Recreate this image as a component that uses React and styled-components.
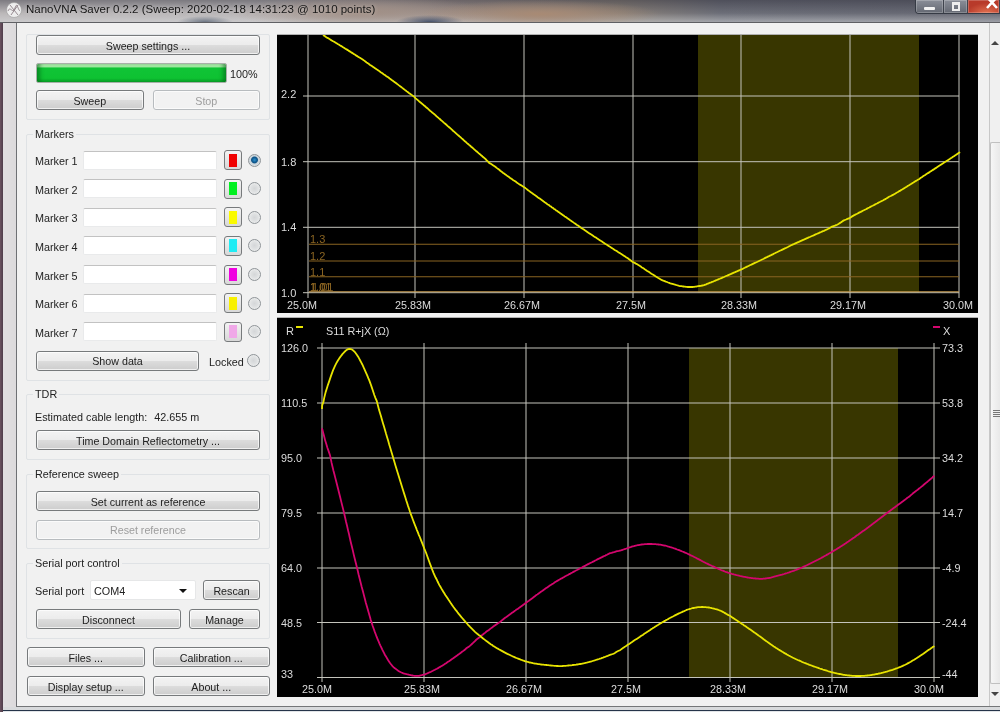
import React from "react";
import styled, { createGlobalStyle } from "styled-components";

const Global = createGlobalStyle`
  html, body { margin: 0; padding: 0; background: #3c3a42; }
  * { box-sizing: border-box; }
`;

const Screen = styled.div`
  width: 1000px; height: 712px; overflow: hidden;
  display: flex; flex-direction: column;
  font: 10.8px "Liberation Sans", Arial, sans-serif; color: #222;
  background: linear-gradient(90deg, #6b5260 0, #4e3c4a 3px, #e0dee0 3px, #dcdadc 16px, #30323a 16px);
  filter: blur(.25px);
`;
const TitleBar = styled.header`
  height: 23px; flex: none; display: flex; align-items: flex-start;
  background:
    radial-gradient(28px 6px at 205px 22px, #6d7684 0, transparent 100%),
    radial-gradient(34px 7px at 430px 22px, #45516a 0, transparent 100%),
    radial-gradient(120px 14px at 540px 14px, #a88a74 0, transparent 100%),
    radial-gradient(130px 16px at 360px 12px, #a08e84 0, transparent 100%),
    linear-gradient(180deg, rgba(50,50,62,.5) 0, rgba(110,112,120,.15) 60%, rgba(205,207,210,.55) 100%),
    linear-gradient(90deg, #c8c4c4 0, #c4c0c0 28%, #a49690 45%, #8c8278 62%, #6c6e78 72%, #646672 100%);
  border-bottom: 1px solid #5f6064;
`;
const TitleIcon = styled.svg`
  width: 16px; height: 16px; margin: 2px 4px 0 6px; flex: none;
`;
const TitleText = styled.span`
  font-size: 11.5px; line-height: 18px; color: #161616; white-space: nowrap; flex: 1;
  text-shadow: 0 0 4px rgba(255,255,255,.45);
`;
const WinControls = styled.div`
  display: flex; height: 14px; width: 85px; flex: none;
  border: 1px solid #353a44; border-top: 0; border-right: 0; border-radius: 0 0 0 4px; overflow: hidden;
`;
const WinButton = styled.div`
  width: ${p => p.$w}px; display: flex; align-items: center; justify-content: center;
  background: ${p => p.$close
    ? "radial-gradient(20px 10px at 60% 100%, #e07050, #b83a2a)"
    : "linear-gradient(180deg,#8a8e98,#646872)"};
  border-right: 1px solid #3f434d;
  box-shadow: inset 0 0 0 1px rgba(255,255,255,.22);
`;
const MinGlyph = styled.i`width: 11px; height: 3px; background: #f2f2f2; margin-top: 3px; border-radius: 1px;`;
const MaxGlyph = styled.i`width: 8px; height: 9px; border: 2px solid #eee; border-top-width: 3px; margin-top: -1px;`;
const CloseGlyph = styled.svg`width: 14px; height: 14px; margin-left: 16px; flex: none;`;

const Body = styled.div`
  margin-left: 16px; display: flex; height: 684px; flex: none;
  background: #f1f1f1; border-left: 1px solid #6e7074; border-bottom: 1px solid #747678;
`;
const BottomEdge = styled.div`
  flex: 1; margin-left: 3px;
  background: linear-gradient(180deg, #d8dadc 0, #d8dadc 3px, #26344a 3px, #26344a 4px, #e2e5e8 4px);
`;
const Sidebar = styled.aside`
  width: 260px; flex: none; padding: 11px 7px 0 9px;
  display: flex; flex-direction: column;
`;
const Group = styled.section`
  border: 1px solid #dfe2e5; border-radius: 2px; padding: 0 9px;
  margin-top: ${p => p.$mt || 0}px; height: ${p => p.$h}px;
  flex: none; display: flex; flex-direction: column;
`;
const GroupTitle = styled.h3`
  margin: -8px 0 ${p => p.$gap}px -3px; height: 14px; line-height: 14px; padding: 0 2px;
  font-weight: normal; font-size: 10.8px; background: #f1f1f1; align-self: flex-start; color: #222;
`;
const Btn = styled.button`
  height: 20px; flex: ${p => p.$w ? `0 0 ${p.$w}px` : 1}; padding: 1px 0 0; min-width: 0;
  font: 10.7px "Liberation Sans", Arial, sans-serif;
  color: ${p => p.disabled ? "#9d9d9d" : "#222"};
  border: 1px solid ${p => p.disabled ? "#b8bcbf" : "#777a7c"}; border-radius: 3px;
  background: ${p => p.disabled
    ? "#f2f2f2"
    : "linear-gradient(180deg,#f3f3f3 0,#ececec 48%,#dcdcdc 52%,#cdcdcd 100%)"};
  box-shadow: inset 0 0 0 1px rgba(255,255,255,.7);
`;
const Row = styled.div`
  display: flex; align-items: center; flex: none; height: 20px;
  gap: ${p => p.$gap || 0}px; margin-top: ${p => p.$mt || 0}px;
`;
const Progress = styled.div`
  width: 191px; height: 20px; border: 1px solid #a8b0a8; border-radius: 2px;
  background:
    linear-gradient(180deg, #b4f0b4 0, #a0eaa0 16%, #10c436 22%, #0ec232 78%, #0aa82a 100%);
  box-shadow: inset 5px 0 4px -2px rgba(0,90,20,.55), inset -5px 0 4px -2px rgba(0,90,20,.55);
`;
const Percent = styled.span`margin-left: 3px; padding-top: 1px;`;
const MarkerLabel = styled.label`width: 47px; flex: none; white-space: nowrap; padding: 2px 0 0 0; margin-left: -1px; margin-right: 1px;`;
const TextInput = styled.div`
  width: 134px; height: 19px; flex: none; background: #fff;
  border: 1px solid #e9eaeb; border-top-color: #c2c2c2; border-radius: 2px;
`;
const Swatch = styled.div`
  width: 18px; height: 20px; margin-left: 7px; flex: none;
  border: 1px solid #777a7c; border-radius: 3px;
  background: linear-gradient(180deg,#f3f3f3,#d8d8d8);
  display: flex; align-items: center; justify-content: center;
`;
const SwatchFill = styled.i`width: 8px; height: 13px; background: ${p => p.$c};`;
const Radio = styled.span`
  width: 13px; height: 13px; border-radius: 50%; flex: none;
  margin-left: ${p => p.$ml};
  border: 1px solid #8f9498;
  background: ${p => p.$on
    ? "radial-gradient(circle at 50% 45%, #2c90cc 0, #0b4f84 36%, #c8d2d8 48%, #eceff1 100%)"
    : "radial-gradient(circle at 50% 50%, #d4d6d8 0, #dfe1e2 45%, #f6f6f6 100%)"};
`;
const Caption = styled.span`
  white-space: nowrap; padding-top: 2px; flex: none;
  margin-left: ${p => p.$ml}px; width: ${p => p.$w ? `${p.$w}px` : "auto"};
`;
const CableLine = styled.div`height: 14px; line-height: 14px; margin: 9px 0 6px -1px; display: flex; gap: 7px;`;
const Combo = styled.div`
  width: 106px; height: 20px; flex: none; margin-right: 7px;
  background: #fff; border: 1px solid #e6e7e8; border-radius: 2px;
  display: flex; align-items: center; justify-content: space-between; padding: 1px 8px 0 3px;
`;
const ComboArrow = styled.i`
  width: 0; height: 0; border: 4px solid transparent; border-top: 4px solid #111; border-bottom: 0;
`;
const FooterRow = styled.div`
  display: flex; gap: 8px; margin-top: ${p => p.$mt}px; flex: none; margin-left: 1px; width: 243px;
`;

const Charts = styled.main`
  width: 701px; flex: none; padding-top: 12px;
  display: flex; flex-direction: column; gap: 5px;
`;
const Plot = styled.svg`
  display: block; width: 701px; height: ${p => p.$h}px; background: #000; flex: none;
  font-family: "Liberation Sans", Arial, sans-serif;
  box-shadow: 0 -1px 0 #b0b0b0;
`;
const ScrollTrack = styled.div`
  margin-left: 11px; width: 11px; flex: none; height: 683px;
  border-left: 1px solid #c8c8c8; background: #f0f0f0;
  display: flex; flex-direction: column; align-items: center;
`;
const ArrowUp = styled.i`
  margin-top: 18px; width: 0; height: 0; flex: none;
  border: 4px solid transparent; border-bottom: 4px solid #444; border-top: 0;
`;
const Thumb = styled.div`
  margin-top: 97px; width: 100%; height: 542px; flex: none;
  border: 1px solid #c0c0c0; border-right: 0; border-radius: 2px 0 0 2px;
  background: linear-gradient(90deg,#f6f6f6,#e8e8e8);
  display: flex; align-items: center; justify-content: center;
`;
const Grip = styled.i`
  width: 7px; height: 7px; margin-left: 2px;
  background: repeating-linear-gradient(180deg,#777 0 1px,#eee 1px 2px);
`;
const ArrowDown = styled.i`
  margin-top: 8px; width: 0; height: 0; flex: none;
  border: 4px solid transparent; border-top: 4px solid #444; border-bottom: 0;
`;

// The curves are traced from a handful of points: sample a spline along x,
// then even out the tracing noise with a short moving average.
const smooth = (pts, half = 6) => {
  const dense = [];
  for (let i = 0; i < pts.length - 1; i++) {
    const p0 = pts[i - 1] || pts[i], p1 = pts[i], p2 = pts[i + 1], p3 = pts[i + 2] || p2;
    const n = Math.max(2, Math.ceil(p2[0] - p1[0]));
    for (let k = 0; k < n; k++) {
      const t = k / n, a = t * t, b = a * t;
      const f = j => 0.5 * (2 * p1[j] + (p2[j] - p0[j]) * t + (2 * p0[j] - 5 * p1[j] + 4 * p2[j] - p3[j]) * a + (3 * p1[j] - p0[j] - 3 * p2[j] + p3[j]) * b);
      dense.push([f(0), f(1)]);
    }
  }
  dense.push(pts[pts.length - 1]);
  const out = dense.map((p, i) => {
    const w = Math.min(half, i, dense.length - 1 - i);
    let sy = 0;
    for (let j = i - w; j <= i + w; j++) sy += dense[j][1];
    return [p[0], sy / (2 * w + 1)];
  });
  return "M" + out.map(p => `${p[0].toFixed(1)} ${p[1].toFixed(1)}`).join("L");
};

const GRID = "#c4c4bc", LBL = "#dcdcdc", YEL = "#e8e400", MAG = "#d4066e", BAND = "#383600", SWR = "#8a6422";

const swrCurve = [[323,35],[363,60],[414,97],[489,162],[525,188],[580,227],[632,261],[662,280],[680,286],[689,287],[704,285],[742,269],[792,245],[832,227],[849,218],[889,197],[919,179],[960,152]];
const rCurve = [[322,409],[323.5,400],[333,370],[341.7,355],[350,348.5],[358.3,356.7],[368.3,378.3],[376.7,401.7],[393.3,458.3],[410,511.7],[424.3,548.3],[436.7,580],[453.3,606.7],[468.3,625],[480,636],[500,650],[526.7,661.7],[553.3,665.7],[566.7,665.7],[586.7,662.7],[610,655],[620,650],[640,636.7],[663.3,621.7],[686.7,610],[701.7,607],[716.7,609.3],[730,616],[753.3,631.7],[776.7,648.3],[800,661],[832.3,672.3],[856.7,676],[880,673.3],[906.7,664],[934.3,646]];
const xCurve = [[322,428.3],[330,456.7],[343.3,510],[356.7,566.7],[371.7,623.3],[385,655],[396.7,670],[413.3,675.7],[425,674.3],[443.3,665],[466.7,648.3],[480,636.7],[500,621.7],[526.7,602.3],[553.3,583.3],[583.3,566.7],[610,553.3],[620,550.7],[636.7,545.3],[651.7,544],[666.7,546],[686.7,553.3],[710,565],[730,573.3],[753.3,578.3],[770,577.7],[800,568.3],[832.3,551.7],[860,533.3],[886.7,513.3],[913.3,493.3],[934.3,475.7]];

const topX = [308,415,524,633,741,850,959];
const topXL = ["25.0M","25.83M","26.67M","27.5M","28.33M","29.17M","30.0M"];
const botX = [322,424,526,628,730,832,934];
const botY = [348,403,458,513,568,622.5,677.5];
const leftL = ["126.0","110.5","95.0","79.5","64.0","48.5","33"];
const rightL = ["73.3","53.8","34.2","14.7","-4.9","-24.4","-44"];

const TopChart = () => (
  <Plot $h={278} viewBox="277 35 701 278">
    <rect x="698" y="35" width="221" height="258" fill={BAND} />
    {topX.map(x => <line key={x} x1={x} x2={x} y1="35" y2="298" stroke={GRID} strokeWidth="1" />)}
    {[96,161.7,227.3,292.7].map(y => <line key={y} x1="303" x2="959" y1={y} y2={y} stroke={GRID} strokeWidth="1" />)}
    {[[244.3,"1.3"],[261,"1.2"],[276.7,"1.1"]].map(([y,t]) => (
      <g key={t}>
        <line x1="309" x2="959" y1={y} y2={y} stroke={SWR} strokeWidth="1.1" />
        <text x="310" y={y-1} fontSize="11" fill={SWR}>{t}</text>
      </g>
    ))}
    <line x1="309" x2="959" y1="291.7" y2="291.7" stroke="#c49a50" strokeWidth="1.1" />
    <text x="310" y="291" fontSize="11" fill={SWR}>1.01</text>
    <text x="310" y="291" fontSize="11" fill={SWR}>1.0</text>
    <text x="312" y="291" fontSize="11" fill={SWR}>1.01</text>
    {[["2.2",98],["1.8",165.5],["1.4",231],["1.0",296.5]].map(([t,y]) => (
      <text key={t} x="281" y={y} fontSize="11" fill={LBL}>{t}</text>
    ))}
    {topX.map((x,i) => <text key={x} x={i===6 ? 958 : i===0 ? 302 : x-2} y="308.5" fontSize="10.8" fill={LBL} textAnchor="middle">{topXL[i]}</text>)}
    <path d={smooth(swrCurve)} fill="none" stroke={YEL} strokeWidth="1.8" />
  </Plot>
);

const BottomChart = () => (
  <Plot $h={379} viewBox="277 318 701 379">
    <rect x="689" y="348" width="209" height="329.5" fill={BAND} />
    {botX.map(x => <line key={x} x1={x} x2={x} y1="343" y2="682" stroke={GRID} strokeWidth="1" />)}
    {botY.map(y => <line key={y} x1="317" x2="940" y1={y} y2={y} stroke={GRID} strokeWidth="1" />)}
    <text x="286" y="334.5" fontSize="11" fill={LBL}>R</text>
    <line x1="296" x2="303" y1="327" y2="327" stroke={YEL} strokeWidth="2" />
    <text x="326" y="334.5" fontSize="10.8" fill={LBL}>S11 R+jX (Ω)</text>
    <line x1="933" x2="940" y1="327" y2="327" stroke={MAG} strokeWidth="2" />
    <text x="943" y="334.5" fontSize="11" fill={LBL}>X</text>
    {leftL.map((t,i) => <text key={t} x="281" y={i===6 ? 678 : botY[i]+4} fontSize="10.8" fill={LBL}>{t}</text>)}
    {rightL.map((t,i) => <text key={t} x="942" y={i===6 ? 678 : botY[i]+4} fontSize="10.8" fill={LBL}>{t}</text>)}
    {botX.map((x,i) => <text key={x} x={i===6 ? 929 : i===0 ? 317 : x-2} y="693" fontSize="10.8" fill={LBL} textAnchor="middle">{topXL[i]}</text>)}
    <path d={smooth(xCurve, 4)} fill="none" stroke={MAG} strokeWidth="1.8" />
    <path d={smooth(rCurve, 3)} fill="none" stroke={YEL} strokeWidth="1.8" />
  </Plot>
);

const markers = [
  ["Marker 1","#f00000"],["Marker 2","#00f020"],["Marker 3","#fafa00"],["Marker 4","#20ecf4"],
  ["Marker 5","#f000e0"],["Marker 6","#f8f000"],["Marker 7","#f0a8e8"],
];

export default function App() {
  return (
    <Screen>
      <Global />
      <TitleBar>
        <TitleIcon viewBox="0 0 16 16">
          <circle cx="8" cy="8" r="7.5" fill="#eeeeee" stroke="#9a9a9a" strokeWidth=".6" />
          <path d="M2 9C4 3 7 13 9 6s3 2 5 3M4 3l8 10M12 3 5 13" fill="none" stroke="#8c7f86" strokeWidth=".9" />
        </TitleIcon>
        <TitleText>NanoVNA Saver 0.2.2 (Sweep: 2020-02-18 14:31:23 @ 1010 points)</TitleText>
        <WinControls>
          <WinButton $w={28}><MinGlyph /></WinButton>
          <WinButton $w={25}><MaxGlyph /></WinButton>
          <WinButton $w={32} $close>
            <CloseGlyph viewBox="0 0 14 14"><path d="M2 -3 12 8M12 -3 2 8" stroke="#fff" strokeWidth="2.6" fill="none" /></CloseGlyph>
          </WinButton>
        </WinControls>
      </TitleBar>
      <Body>
        <Sidebar>
          <Group $h={86}>
            <Row><Btn>Sweep settings ...</Btn></Row>
            <Row $mt={8}><Progress /><Percent>100%</Percent></Row>
            <Row $mt={7} $gap={9}><Btn>Sweep</Btn><Btn disabled>Stop</Btn></Row>
          </Group>
          <Group $mt={14} $h={247}>
            <GroupTitle $gap={9}>Markers</GroupTitle>
            {markers.map(([name, c], i) => (
              <Row key={name} $mt={i ? 8.67 : 0}>
                <MarkerLabel>{name}</MarkerLabel>
                <TextInput />
                <Swatch><SwatchFill $c={c} /></Swatch>
                <Radio $ml="6px" $on={i === 0} />
              </Row>
            ))}
            <Row $mt={9}>
              <Btn $w={163}>Show data</Btn>
              <Caption $ml={10}>Locked</Caption>
              <Radio $ml="auto" />
            </Row>
          </Group>
          <Group $mt={13} $h={66}>
            <GroupTitle $gap={0}>TDR</GroupTitle>
            <CableLine><span>Estimated cable length:</span><span>42.655 m</span></CableLine>
            <Row><Btn>Time Domain Reflectometry ...</Btn></Row>
          </Group>
          <Group $mt={14} $h={75}>
            <GroupTitle $gap={10}>Reference sweep</GroupTitle>
            <Row><Btn>Set current as reference</Btn></Row>
            <Row $mt={8.5}><Btn disabled>Reset reference</Btn></Row>
          </Group>
          <Group $mt={14} $h={76}>
            <GroupTitle $gap={10}>Serial port control</GroupTitle>
            <Row>
              <Caption $ml={-1} $w={55}>Serial port</Caption>
              <Combo><span>COM4</span><ComboArrow /></Combo>
              <Btn>Rescan</Btn>
            </Row>
            <Row $mt={9} $gap={8}><Btn $w={145}>Disconnect</Btn><Btn>Manage</Btn></Row>
          </Group>
          <FooterRow $mt={8}><Btn>Files ...</Btn><Btn>Calibration ...</Btn></FooterRow>
          <FooterRow $mt={9}><Btn>Display setup ...</Btn><Btn>About ...</Btn></FooterRow>
        </Sidebar>
        <Charts>
          <TopChart />
          <BottomChart />
        </Charts>
        <ScrollTrack>
          <ArrowUp />
          <Thumb><Grip /></Thumb>
          <ArrowDown />
        </ScrollTrack>
      </Body>
      <BottomEdge />
    </Screen>
  );
}
